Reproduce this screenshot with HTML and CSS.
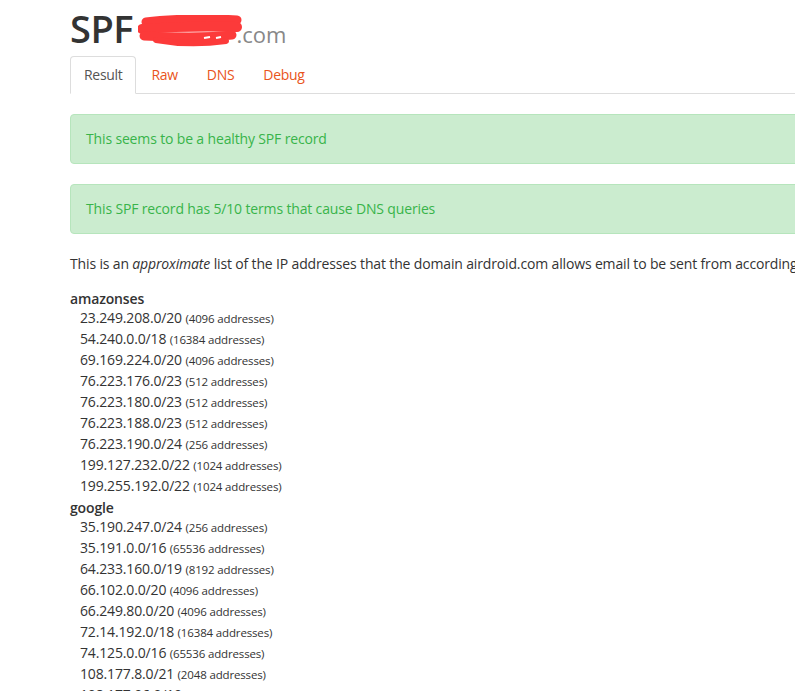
FILE: index.html
```html
<!DOCTYPE html>
<html>
<head>
<meta charset="utf-8">
<title>SPF</title>
<link rel="stylesheet" href="styles.css">
</head>
<body>
<div class="container">
  <h1 class="title">SPF <svg class="redact" width="104" height="32" viewBox="0 0 104 32"><path d="M8 7 C30 4 70 3 99 5" stroke="#fc3a3a" stroke-width="9" fill="none" stroke-linecap="round"/><path d="M4 14 C30 12 70 11 99 12" stroke="#fc3a3a" stroke-width="10" fill="none" stroke-linecap="round"/><path d="M6 21 C35 22 70 23 94 20" stroke="#fc3a3a" stroke-width="9" fill="none" stroke-linecap="round"/><path d="M18 25 C40 29 60 30 88 26" stroke="#fc3a3a" stroke-width="6" fill="none" stroke-linecap="round"/><path d="M66 23 l6 -1" stroke="#fff" stroke-width="2"/><path d="M78 23 l5 -1" stroke="#fff" stroke-width="2"/></svg><small>.com</small></h1>
  <ul class="tabs">
    <li class="tab active"><a>Result</a></li>
    <li class="tab"><a>Raw</a></li>
    <li class="tab"><a>DNS</a></li>
    <li class="tab"><a>Debug</a></li>
  </ul>
  <div class="alert">This seems to be a healthy SPF record</div>
  <div class="alert">This SPF record has 5/10 terms that cause DNS queries</div>
  <p class="intro">This is an <em>approximate</em> list of the IP addresses that the domain airdroid.com allows email to be sent from according to its SPF record.</p>
  <div class="group">
    <div class="group-name">amazonses</div>
    <div class="ip">23.249.208.0/20 <small>(4096 addresses)</small></div>
    <div class="ip">54.240.0.0/18 <small>(16384 addresses)</small></div>
    <div class="ip">69.169.224.0/20 <small>(4096 addresses)</small></div>
    <div class="ip">76.223.176.0/23 <small>(512 addresses)</small></div>
    <div class="ip">76.223.180.0/23 <small>(512 addresses)</small></div>
    <div class="ip">76.223.188.0/23 <small>(512 addresses)</small></div>
    <div class="ip">76.223.190.0/24 <small>(256 addresses)</small></div>
    <div class="ip">199.127.232.0/22 <small>(1024 addresses)</small></div>
    <div class="ip">199.255.192.0/22 <small>(1024 addresses)</small></div>
  </div>
  <div class="group">
    <div class="group-name">google</div>
    <div class="ip">35.190.247.0/24 <small>(256 addresses)</small></div>
    <div class="ip">35.191.0.0/16 <small>(65536 addresses)</small></div>
    <div class="ip">64.233.160.0/19 <small>(8192 addresses)</small></div>
    <div class="ip">66.102.0.0/20 <small>(4096 addresses)</small></div>
    <div class="ip">66.249.80.0/20 <small>(4096 addresses)</small></div>
    <div class="ip">72.14.192.0/18 <small>(16384 addresses)</small></div>
    <div class="ip">74.125.0.0/16 <small>(65536 addresses)</small></div>
    <div class="ip">108.177.8.0/21 <small>(2048 addresses)</small></div>
    <div class="ip">108.177.96.0/19 <small>(8192 addresses)</small></div>
  </div>
</div>
</body>
</html>
```

FILE: styles.css
```css
html, body {
  margin: 0;
  padding: 0;
  overflow: hidden;
  background: #fff;
}
body {
  font-family: "Open Sans", "Noto Sans", sans-serif;
  font-size: 14px;
  line-height: 20px;
  color: #333;
  letter-spacing: -0.15px;
}
.container {
  width: 725px;
  height: 691px;
  padding-left: 70px;
  overflow: hidden;
}
.title {
  font-size: 38px;
  font-weight: 600;
  line-height: 42px;
  margin: 7px 0 1px;
  color: #333;
  letter-spacing: -0.5px;
  white-space: nowrap;
}
.title small {
  font-size: 22px;
  color: #888;
  font-weight: 400;
  letter-spacing: 0;
}
.redact {
  vertical-align: -4px;
  margin-left: -4px;
  margin-right: -6px;
}
.tabs {
  list-style: none;
  margin: 0 0 20px;
  padding: 0;
  display: flex;
  border-bottom: 1px solid #ddd;
  width: 760px;
}
.tab {
  margin-right: 1px;
  margin-bottom: -1px;
}
.tab a {
  display: block;
  padding: 8px 13px;
  border: 1px solid transparent;
  border-radius: 4px 4px 0 0;
  color: #e95420;
  line-height: 20px;
  letter-spacing: -0.3px;
}
.tab.active a {
  color: #555;
  background: #fff;
  border-color: #ddd #ddd transparent;
}
.alert {
  width: 760px;
  background: #cbeccf;
  border: 1px solid #b6e5bc;
  color: #38b44a;
  border-radius: 4px;
  padding: 14px 15px;
  margin-bottom: 20px;
}
.intro {
  margin: 0 0 15px;
  white-space: nowrap;
}
.group-name {
  font-weight: 600;
  line-height: 20px;
  height: 20px;
}
.ip {
  padding-left: 10px;
  line-height: 17px;
  height: 17px;
  padding-bottom: 4px;
}
.ip small {
  font-size: 11.5px;
  line-height: 1;
}
```
